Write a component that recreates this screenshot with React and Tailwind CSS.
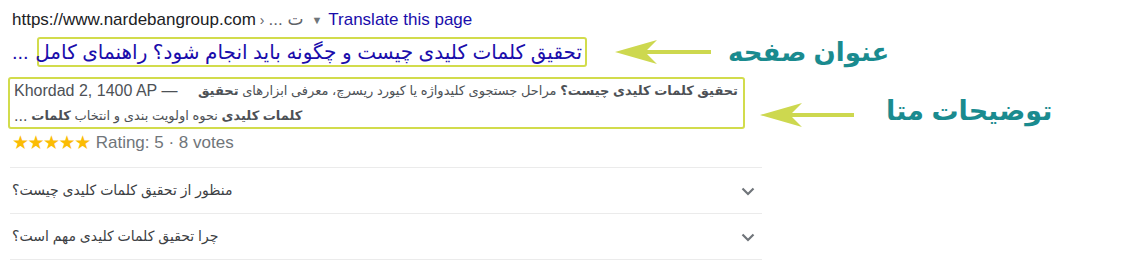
import React from 'react';

const ARIAL = { fontFamily: '"Liberation Sans", "DejaVu Sans", sans-serif' };

const Arrow = ({ width }) => (
  <svg width={width} height="26" viewBox={`0 0 ${width} 26`} className="shrink-0">
    <path d={`M0 13 L42 1 L32 11 L${width} 11 L${width} 15 L32 15 L42 25 Z`} fill="#cdd84f" />
  </svg>
);

const Chevron = () => (
  <svg width="24" height="24" viewBox="0 0 24 24" className="shrink-0">
    <path d="M6.5 9.5 L12 15 L17.5 9.5" fill="none" stroke="#70757a" strokeWidth="2.2" />
  </svg>
);

const questions = ['منظور از تحقیق کلمات کلیدی چیست؟', 'چرا تحقیق کلمات کلیدی مهم است؟'];

export default function App() {
  return (
    <div className="w-[1136px] h-[279px] bg-white overflow-hidden" style={ARIAL}>
      <div className="pl-3 pt-[10px] flex items-center gap-1 text-[17px] leading-5 text-[#202124]">
        <span>https://www.nardebangroup.com</span>
        <span className="text-[#5f6368] text-[14px]">›</span>
        <span className="text-[#5f6368]">... <span dir="rtl">ت</span></span>
        <span className="text-[#70757a] text-[11px] ml-1">▼</span>
        <span className="text-[#1a0dab] ml-0.5">Translate this page</span>
      </div>

      <div className="flex items-center mt-[7px] h-[30px]">
        <span className="pl-3 w-[37px] text-[#1a0dab] text-[20px] leading-none">...</span>
        <div className="w-[550px] h-[30px] border-2 border-[#d2dc4c] rounded-[3px] flex items-center justify-end pr-[3px]">
          <span dir="rtl" className="text-[#1a0dab] text-[20px] leading-none whitespace-nowrap">
            تحقیق کلمات کلیدی چیست و چگونه باید انجام شود؟ راهنمای کامل
          </span>
        </div>
        <div className="ml-[28px]"><Arrow width={96} /></div>
        <span dir="rtl" className="ml-[17px] text-[#1a8b8f] text-[26px] font-bold leading-none">عنوان صفحه</span>
      </div>

      <div className="flex items-end mt-[10px]">
        <div className="ml-2 w-[737px] h-[52px] border-2 border-[#d2dc4c] rounded-[3px] pl-1 pr-[5px] text-[13px] leading-[24px] text-[#4d5156]">
          <div className="flex justify-between items-center whitespace-nowrap h-[24px]">
            <span className="text-[16px]">Khordad 2, 1400 AP —</span>
            <span dir="rtl">
              <b>تحقیق کلمات کلیدی چیست؟</b> مراحل جستجوی کلیدواژه یا کیورد ریسرچ، معرفی ابزارهای <b>تحقیق</b>
            </span>
          </div>
          <div className="flex items-center gap-1 whitespace-nowrap h-[26px]">
            <span className="text-[16px]">...</span>
            <span dir="rtl">
              <b>کلمات کلیدی</b> نحوه اولویت بندی و انتخاب <b>کلمات</b>
            </span>
          </div>
        </div>
        <div className="ml-[15px] mb-[1px]"><Arrow width={94} /></div>
        <span dir="rtl" className="ml-[32px] mb-[1px] text-[#1a8b8f] text-[27px] font-bold leading-[34px]">توضیحات متا</span>
      </div>

      <div className="pl-3 mt-[4px] flex items-center gap-[6px] text-[17px] leading-5 text-[#70757a]">
        <span className="text-[#fbbc04] text-[19px] tracking-[-1.5px]">★★★★★</span>
        <span>Rating: 5 · 8 votes</span>
      </div>

      <div className="ml-[10px] w-[752px] mt-[14px] border-t border-[#ebebeb]">
        {questions.map((q) => (
          <div key={q} className="h-[46px] flex items-center justify-between border-b border-[#ebebeb] pl-[2px] pr-[2px]">
            <span dir="rtl" className="text-[14px] text-[#3c4043]">{q}</span>
            <Chevron />
          </div>
        ))}
      </div>
    </div>
  );
}
